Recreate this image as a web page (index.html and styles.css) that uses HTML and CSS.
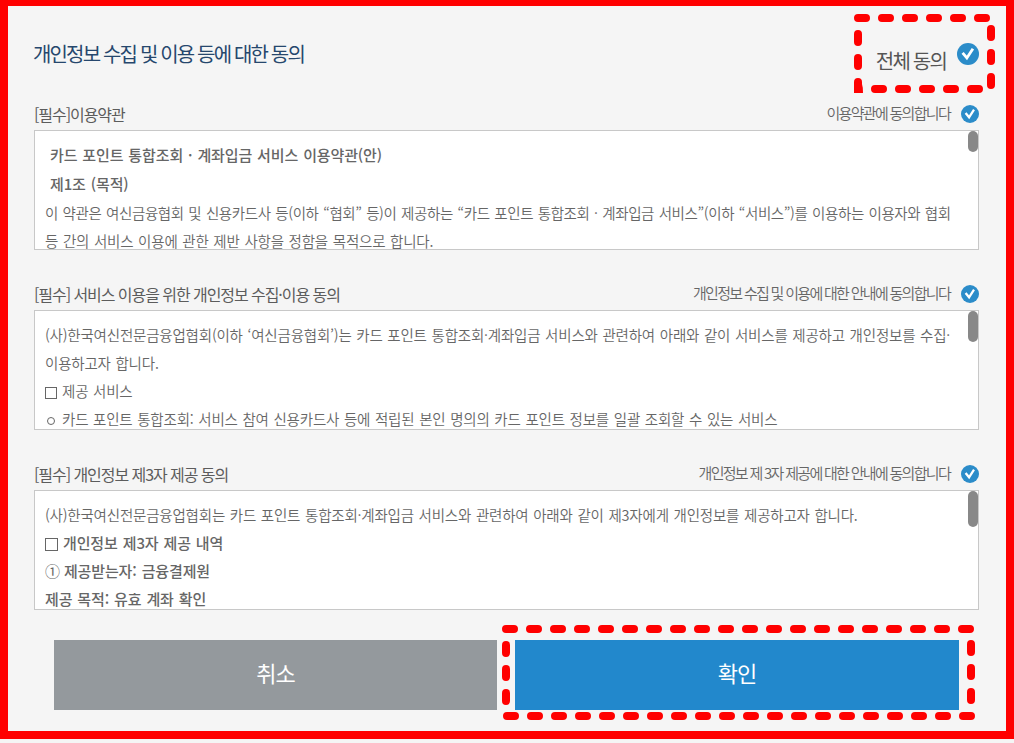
FILE: index.html
```
<!DOCTYPE html>
<html lang="ko">
<head>
    <meta charset="UTF-8">
    <meta name="viewport" content="width=device-width, initial-scale=1.0">
    <title>개인정보 수집 및 이용 등에 대한 동의</title>
    <link rel="stylesheet" href="styles.css">
</head>
<body>
    <svg class="symbols">
        <symbol id="check" viewBox="0 0 22 22">
            <circle cx="11" cy="11" r="11" fill="#2b8cc9"/>
            <path d="M5.6 9.8 L9.9 15 L15.9 5.8" fill="none" stroke="#fff" stroke-width="2.8"/>
        </symbol>
    </svg>

    <div class="container">
        <div class="header">
            <h1>개인정보 수집 및 이용 등에 대한 동의</h1>
            <div class="agree-all">
                <span>전체 동의</span>
                <svg class="check-big"><use href="#check"/></svg>
            </div>
        </div>

        <div class="section">
            <div class="section-head">
                <h2>[필수]이용약관</h2>
                <div class="agree"><span>이용약관에 동의합니다</span><svg class="check"><use href="#check"/></svg></div>
            </div>
            <div class="terms">
                <p class="strong indent">카드 포인트 통합조회 · 계좌입금 서비스 이용약관(안)</p>
                <p class="strong indent article">제1조 (목적)</p>
                <p><span class="tight">이 약관은 여신금융협회 및 신용카드사 등(이하 “협회” 등)이 제공하는 “카드 포인트 통합조회 · 계좌입금 서비스”(이하 “서비스”)를 이용하는 이용자와 협회</span><br>등 간의 서비스 이용에 관한 제반 사항을 정함을 목적으로 합니다.</p>
                <div class="thumb thumb-small"></div>
            </div>
        </div>

        <div class="section">
            <div class="section-head">
                <h2>[필수] 서비스 이용을 위한 개인정보 수집·이용 동의</h2>
                <div class="agree"><span>개인정보 수집 및 이용에 대한 안내에 동의합니다</span><svg class="check"><use href="#check"/></svg></div>
            </div>
            <div class="terms">
                <p>(사)한국여신전문금융업협회(이하 ‘여신금융협회’)는 카드 포인트 통합조회·계좌입금 서비스와 관련하여 아래와 같이 서비스를 제공하고 개인정보를 수집·<br>이용하고자 합니다.</p>
                <p><span class="square"></span>제공 서비스</p>
                <p><span class="bullet"></span>카드 포인트 통합조회: 서비스 참여 신용카드사 등에 적립된 본인 명의의 카드 포인트 정보를 일괄 조회할 수 있는 서비스</p>
                <div class="thumb thumb-medium"></div>
            </div>
        </div>

        <div class="section">
            <div class="section-head">
                <h2>[필수] 개인정보 제3자 제공 동의</h2>
                <div class="agree"><span>개인정보 제 3자 제공에 대한 안내에 동의합니다</span><svg class="check"><use href="#check"/></svg></div>
            </div>
            <div class="terms">
                <p>(사)한국여신전문금융업협회는 카드 포인트 통합조회·계좌입금 서비스와 관련하여 아래와 같이 제3자에게 개인정보를 제공하고자 합니다.</p>
                <p class="strong"><span class="square"></span>개인정보 제3자 제공 내역</p>
                <p class="strong"><span class="num">①</span>제공받는자: 금융결제원</p>
                <p class="strong">제공 목적: 유효 계좌 확인</p>
                <div class="thumb thumb-large"></div>
            </div>
        </div>

        <div class="buttons">
            <button class="btn cancel">취소</button>
            <button class="btn confirm">확인</button>
        </div>
    </div>

    <!-- dashed highlights around "agree to all" and "confirm" -->
    <svg class="highlight" viewBox="0 0 1014 743">
        <path d="M858 18 H990"/>
        <path d="M858 34 V88"/>
        <path d="M991 29 V86"/>
        <path d="M875 89 H984"/>
        <path class="corner" d="M854 84 H862 Q863 87 863 93 H854 Z"/>
        <path d="M506 629 H972"/>
        <path d="M506 645 V702"/>
        <path d="M971 644 V701"/>
        <path d="M507 716 H973"/>
    </svg>
</body>
</html>
```
FILE: styles.css
```
* {
    box-sizing: border-box;
}
body {
    margin: 0;
    background: #f5f5f5;
    font-family: "Noto Sans CJK KR", sans-serif;
    color: #666;
    overflow: hidden;
}
h1, h2, p {
    margin: 0;
    white-space: nowrap;
}
.symbols {
    display: none;
}
.container {
    height: 739px;
    padding: 0 27px 0 26px;
    border: 8px solid #f00;
    border-top-width: 6px;
}
.header {
    display: flex;
    justify-content: space-between;
    height: 92px;
    padding-top: 33px;
}
h1 {
    margin-left: -1px;
    font-size: 20px;
    font-weight: 400;
    line-height: 30px;
    letter-spacing: -1.84px;
    color: #26476d;
}
.agree-all {
    display: flex;
    font-size: 20px;
    line-height: 30px;
    letter-spacing: -1.8px;
    color: #555;
}
.agree-all span {
    margin-top: 7px;
}
.check-big {
    width: 22px;
    height: 22px;
    margin: 4px 0 0 11px;
}
.section {
    height: 180px;
}
.section-head {
    display: flex;
    justify-content: space-between;
    align-items: center;
    height: 32px;
}
h2 {
    margin-top: -1px;
    font-size: 16px;
    font-weight: 400;
    letter-spacing: -1.06px;
    color: #5c5c5c;
}
.agree {
    display: flex;
    align-items: center;
    font-size: 15px;
    font-weight: 350;
    letter-spacing: -1.7px;
}
.agree span {
    margin-top: -3px;
}
.check {
    width: 18px;
    height: 18px;
    margin-left: 11px;
}
.terms {
    position: relative;
    height: 120px;
    padding: 10px;
    border: 1px solid #c8c8c8;
    background: #fff;
    font-size: 14.5px;
    font-weight: 350;
    line-height: 28px;
    letter-spacing: -0.2px;
    word-spacing: 0.9px;
    overflow: hidden;
}
.tight {
    letter-spacing: -0.38px;
}
.strong {
    font-size: 15px;
    font-weight: 500;
    letter-spacing: -0.12px;
}
.indent {
    padding-left: 5px;
}
.article {
    padding-bottom: 1px;
    line-height: 29px;
}
.square {
    display: inline-block;
    width: 12px;
    height: 12px;
    margin: 0 5px 0 0;
    border: 1px solid #666;
    vertical-align: -2px;
}
.strong .square {
    width: 13px;
    height: 13px;
}
.bullet {
    display: inline-block;
    width: 8px;
    height: 8px;
    margin: 0 7px 0 2px;
    border: 1px solid #666;
    border-radius: 50%;
}
.num {
    margin-right: 4px;
    font-weight: 400;
}
.thumb {
    position: absolute;
    top: 0;
    right: 0;
    width: 10px;
    border-radius: 5px;
    background: #888;
}
.thumb-small { height: 21px; }
.thumb-medium { height: 31px; }
.thumb-large { height: 36px; }
.buttons {
    display: flex;
    gap: 18px;
    padding: 2px 20px 0;
}
.btn {
    flex: 1;
    height: 70px;
    padding: 0 0 6px;
    border: none;
    font-family: inherit;
    font-size: 22px;
    letter-spacing: -1px;
    color: #fff;
}
.cancel {
    flex: 0 0 443px;
    background: #94999d;
}
.confirm {
    background: #2288cc;
}
.highlight {
    position: absolute;
    top: 0;
    left: 0;
    width: 1014px;
    height: 743px;
    fill: none;
    stroke: #f00;
    stroke-width: 8;
    stroke-linecap: round;
    stroke-dasharray: 8 16;
    pointer-events: none;
}
.corner {
    fill: #f00;
    stroke: none;
}
```
